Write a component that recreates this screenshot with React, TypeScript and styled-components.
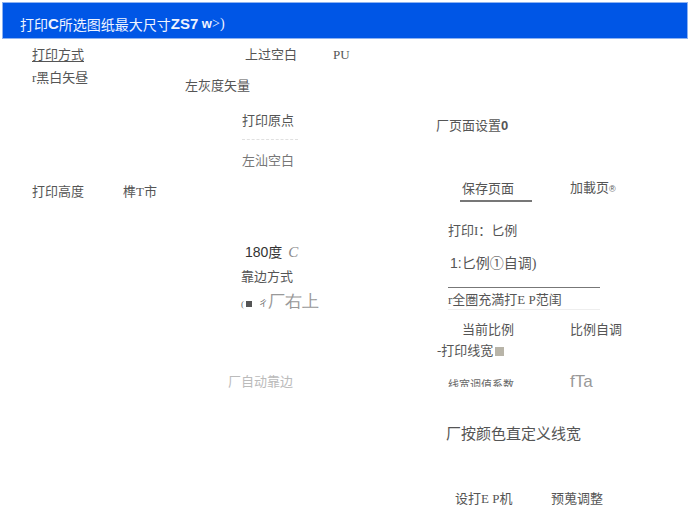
import React from 'react';
import styled, { createGlobalStyle } from 'styled-components';

const GlobalStyle = createGlobalStyle`
  html, body { margin: 0; padding: 0; background: #fff; }
  body {
    font-family: "Liberation Serif", "Noto Sans CJK SC", serif;
    color: #555;
  }
`;

const Page = styled.div`
  width: 690px;
  height: 517px;
  overflow: hidden;
  display: flex;
  flex-direction: column;
`;

const TitleBar = styled.div`
  margin: 2px 2px 0 2px;
  height: 37px;
  background: #0056e6;
  border: 1px solid #8db2f2;
  display: flex;
  align-items: center;
  padding: 6px 0 0 17px;
  box-sizing: border-box;
  color: #eef3ff;
  font-size: 14px;
`;

const Big = styled.span`
  font-family: "Liberation Sans", "Noto Sans CJK SC", sans-serif;
  font-size: 15px;
  font-weight: 700;
`;

const Body = styled.div`
  display: grid;
  grid-template-columns: 160px 260px 270px;
  flex: 1;
`;

const Column = styled.div`
  display: flex;
  flex-direction: column;
  align-items: flex-start;
`;

const Label = styled.div<{ $top?: number; $indent?: number; $size?: number; $tone?: string; $width?: number }>`
  margin-top: ${p => p.$top ?? 0}px;
  margin-left: ${p => p.$indent ?? 0}px;
  font-size: ${p => p.$size ?? 13}px;
  line-height: 16px;
  color: ${p => p.$tone ?? '#555'};
  white-space: nowrap;
  ${p => (p.$width ? `width: ${p.$width}px;` : '')}
`;

const Row = styled.div<{ $top?: number; $indent?: number }>`
  display: flex;
  align-items: center;
  margin-top: ${p => p.$top ?? 0}px;
  margin-left: ${p => p.$indent ?? 0}px;
`;

const Underlined = styled(Label)`
  text-decoration: underline;
  text-underline-offset: 2px;
`;

const TabLabel = styled(Label)`
  padding: 0 2px 3px 2px;
  border-bottom: 2px solid #777;
`;

const DottedRule = styled.div<{ $top: number; $indent: number; $width: number }>`
  margin-top: ${p => p.$top}px;
  margin-left: ${p => p.$indent}px;
  width: ${p => p.$width}px;
  border-top: 1px dashed #e0e0e0;
`;

const Rule = styled.div<{ $top: number; $indent: number; $width: number }>`
  margin-top: ${p => p.$top}px;
  margin-left: ${p => p.$indent}px;
  width: ${p => p.$width}px;
  border-top: 1px solid #777;
`;

const FieldLabel = styled(Label)`
  border-bottom: 1px solid #eee;
  padding-bottom: 1px;
`;

const Swatch = styled.span`
  display: inline-block;
  width: 9px;
  height: 9px;
  margin-left: 2px;
  background: #b8b4a8;
  vertical-align: -1px;
`;

const Mark = styled.span`
  display: inline-block;
  width: 6px;
  height: 6px;
  margin-left: 2px;
  background: #555;
`;

/* the coefficient label is half hidden under the next control in the original */
const Clipped = styled.div`
  height: 9px;
  overflow: hidden;
  margin-top: 0;
  margin-left: 28px;
  width: 122px;
  font-size: 11px;
  line-height: 14px;
  color: #666;
  white-space: nowrap;
`;

const Light = styled.span`
  font-family: "Liberation Sans", "DejaVu Sans", sans-serif;
  font-size: 17px;
  color: #999;
`;

const Italic = styled.span`
  font-style: italic;
  color: #888;
  margin-left: 6px;
  font-size: 15px;
`;

const Num = styled.span`
  font-family: "Liberation Sans", sans-serif;
`;

export default function App() {
  return (
    <>
      <GlobalStyle />
      <Page>
        <TitleBar>
          打印<Big>C</Big>所选图纸最大尺寸<Big>ZS7</Big>&nbsp;<Big style={{ fontSize: 13 }}>w</Big>&gt;)
        </TitleBar>
        <Body>
          <Column>
            <Underlined $top={8} $indent={32}>打印方式</Underlined>
            <Label $top={7} $indent={32}>r黑白矢昼</Label>
            <Row $top={98} $indent={32}>
              <Label $width={91}>打印高度</Label>
              <Label>榫T市</Label>
            </Row>
          </Column>

          <Column>
            <Row $top={8} $indent={85}>
              <Label $width={88}>上过空白</Label>
              <Label>PU</Label>
            </Row>
            <Label $top={15} $indent={25}>左灰度矢量</Label>
            <Label $top={19} $indent={82}>打印原点</Label>
            <DottedRule $top={10} $indent={82} $width={56} />
            <Label $top={13} $indent={82} $tone="#777">左汕空白</Label>
            <Label $top={75} $indent={85} $size={14} $tone="#333">
              <Num>180</Num>度<Italic>C</Italic>
            </Label>
            <Label $top={8} $indent={81}>靠边方式</Label>
            <Label $top={9} $indent={81} $size={9} $tone="#666">
              (<Mark />&nbsp;&nbsp;&nbsp;ㄔ<Light>厂右上</Light>
            </Label>
            <Label $top={62} $indent={68} $tone="#bbb">厂自动靠边</Label>
          </Column>

          <Column>
            <Label $top={79} $indent={16}>
              厂页面设置<Num style={{ fontWeight: 700 }}>0</Num>
            </Label>
            <Row $top={46} $indent={40}>
              <TabLabel $width={68}>保存页面</TabLabel>
              <Label $indent={38} style={{ marginBottom: 5 }}>加載页<Num style={{ fontSize: 9 }}>®</Num></Label>
            </Row>
            <Label $top={21} $indent={28}>打印I：匕例</Label>
            <Label $top={16} $indent={30} $size={14}>
              <Num>1:</Num>匕例①自调)
            </Label>
            <Rule $top={15} $indent={28} $width={152} />
            <FieldLabel $top={4} $indent={28} $width={152}>r全圏充満打E P范闺</FieldLabel>
            <Row $top={12} $indent={42}>
              <Label $width={108}>当前比例</Label>
              <Label>比例自调</Label>
            </Row>
            <Label $top={5} $indent={17}>-打印线宽<Swatch /></Label>
            <Row $top={13}>
              <Clipped>线宽调值系数</Clipped>
              <Light>fTa</Light>
            </Row>
            <Label $top={34} $indent={26} $size={15}>厂按颜色直定义线宽</Label>
            <Row $top={49} $indent={35}>
              <Label $width={96}>设打E P机</Label>
              <Label>预蒐调整</Label>
            </Row>
          </Column>
        </Body>
      </Page>
    </>
  );
}
